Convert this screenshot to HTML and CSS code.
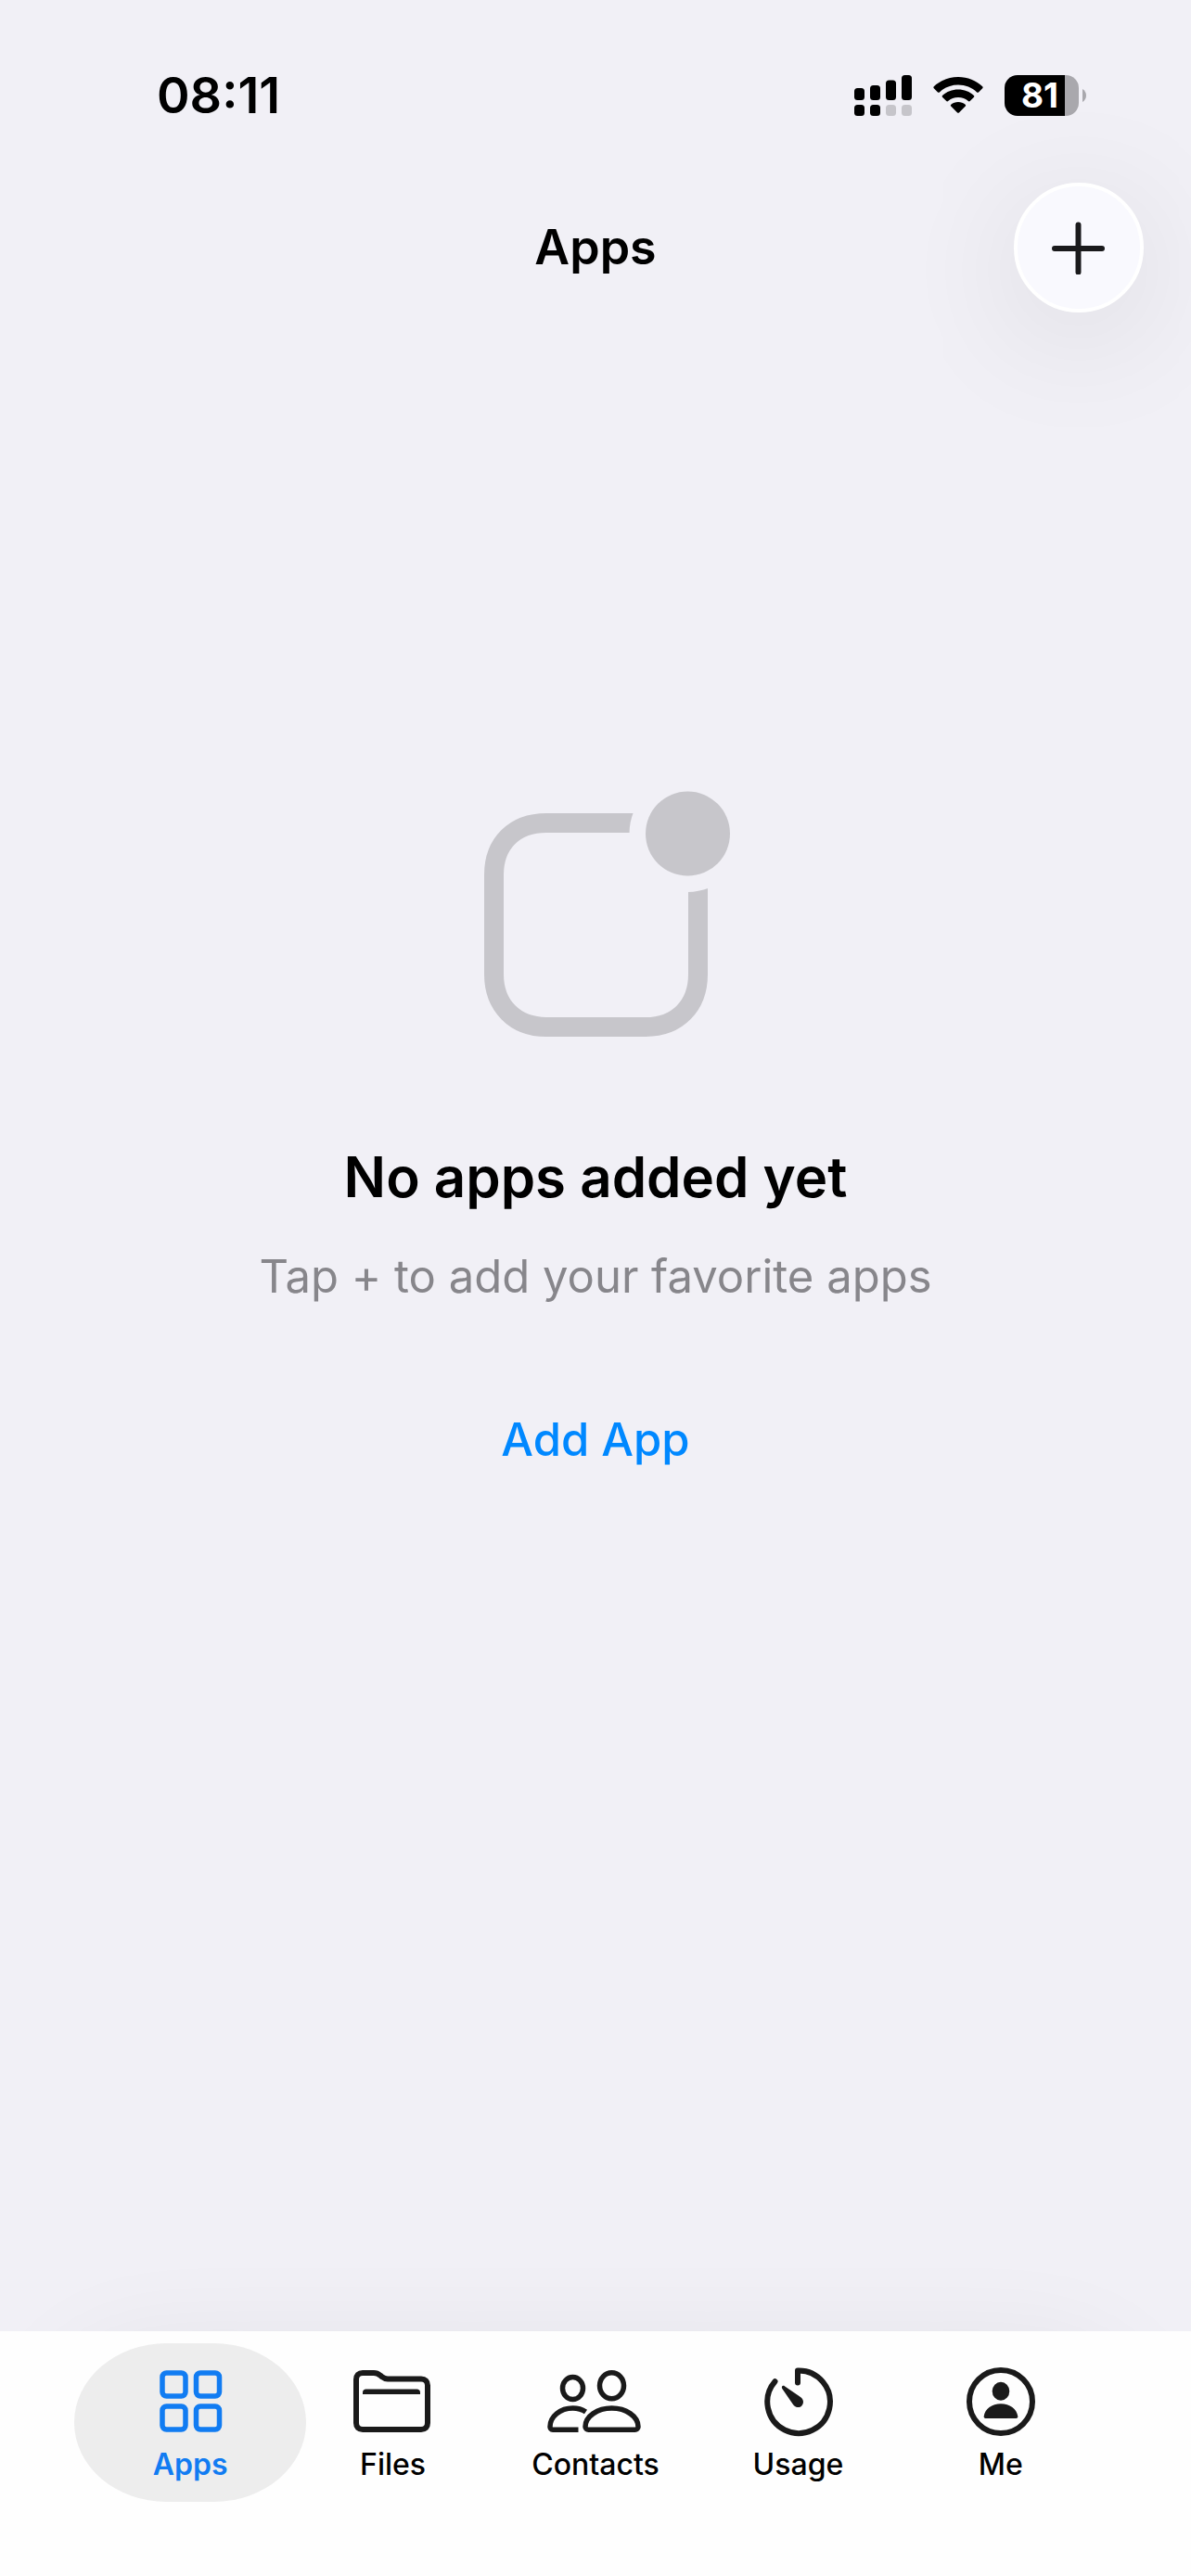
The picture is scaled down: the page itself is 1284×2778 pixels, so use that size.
FILE: index.html
```html
<!DOCTYPE html>
<html lang="en">
<head>
  <meta charset="UTF-8">
  <meta name="viewport" content="width=device-width, initial-scale=1.0">
  <title>Apps</title>
  <link rel="stylesheet" href="styles.css">
</head>
<body>
  <div class="status-bar">
    <time class="clock">08:11</time>
    <div class="status-icons">
      <svg class="signal" width="62" height="44" viewBox="0 0 62 44" aria-hidden="true">
        <rect x="0" y="14" width="11" height="13" rx="3.5"/>
        <rect x="17" y="11" width="11" height="16" rx="3.5"/>
        <rect x="34" y="5.500" width="11" height="21.500" rx="3.5"/>
        <rect x="51" y="0" width="11" height="27" rx="3.5"/>
        <rect x="0" y="32" width="11" height="12" rx="3.5"/>
        <rect x="17" y="32" width="11" height="12" rx="3.5"/>
        <rect class="dim" x="34" y="32" width="11" height="12" rx="3.5"/>
        <rect class="dim" x="51" y="32" width="11" height="12" rx="3.5"/>
      </svg>
      <svg class="wifi" width="54" height="40" viewBox="0 0 54 40" aria-hidden="true">
        <path d="M27 0C16.800 0 7.600 3.900 .8 10.300c-.6.600-.6 1.300 0 1.900l4.200 4.200c.5.500 1.300.5 1.900 0C12.100 11.500 19.200 8.600 27 8.600s14.900 2.900 20.100 7.800c.6.500 1.400.5 1.900 0l4.200-4.200c.6-.6.6-1.300 0-1.900C46.400 3.900 37.200 0 27 0z"/>
        <path d="M27 13.500c-6.500 0-12.400 2.400-16.900 6.400-.6.500-.6 1.300-.1 1.900l4.300 4.200c.5.500 1.200.5 1.800.1 2.900-2.600 6.700-4.100 10.900-4.100s8 1.500 10.900 4.100c.6.400 1.300.4 1.800-.1l4.300-4.200c.5-.6.500-1.400-.1-1.900-4.500-4-10.400-6.400-16.900-6.400z"/>
        <path d="M27 27c-2.900 0-5.600 1.100-7.700 2.700-.6.500-.6 1.300-.1 1.800l6.900 6.900c.5.500 1.300.5 1.800 0l6.900-6.900c.5-.5.500-1.300-.1-1.800C32.600 28.100 29.900 27 27 27z"/>
      </svg>
      <div class="battery">
        <span class="battery-body">81</span>
        <svg width="4" height="14" viewBox="0 0 4 14" aria-hidden="true"><path d="M0 0C2.500 1.500 4 4 4 7s-1.500 5.500-4 7z"/></svg>
      </div>
    </div>
  </div>

  <header class="header">
    <h1>Apps</h1>
    <button class="add-button" type="button" aria-label="Add">
      <svg width="58" height="58" viewBox="0 0 58 58"><path d="M28.500 4.500v51M3 30h51"/></svg>
    </button>
  </header>

  <main class="empty">
    <svg class="empty-icon" width="290" height="266" viewBox="0 0 290 266" aria-hidden="true">
      <mask id="badge-gap">
        <rect width="290" height="266" fill="#fff"/>
        <circle cx="244.500" cy="46" r="63" fill="#000"/>
      </mask>
      <path mask="url(#badge-gap)" fill="none" stroke="#c7c6cb" stroke-width="21" d="M92 34.500h107c34 0 56.500 22 56.500 56v107c0 34-22 57-56.500 57H92c-34 0-56.500-23-56.500-57v-107c0-34 22-56 56.500-56z"/>
      <circle cx="244.500" cy="46" r="45.500" fill="#c7c6cb"/>
    </svg>
    <h2>No apps added yet</h2>
    <p>Tap + to add your favorite apps</p>
    <button class="link-button" type="button">Add App</button>
  </main>

  <nav class="tab-bar">
    <a class="tab active" href="#apps" aria-current="page">
      <svg width="104" height="76" viewBox="0 0 104 76" aria-hidden="true">
        <g class="line" stroke-width="5.500">
          <rect x="22" y="7" width="25" height="25" rx="4.500"/>
          <rect x="58.500" y="7" width="25" height="25" rx="4.500"/>
          <rect x="22" y="43" width="25" height="25" rx="4.500"/>
          <rect x="58.500" y="43" width="25" height="25" rx="4.500"/>
        </g>
      </svg>
      <span>Apps</span>
    </a>
    <a class="tab" href="#files">
      <svg width="104" height="76" viewBox="0 0 104 76" aria-hidden="true">
        <g class="line" stroke-width="6">
          <path d="M12 61V14c0-4.500 2.500-7 7-7h12c3 0 5 1 7 2.700l2 1.600c2 1.700 3.500 2.200 6 2.200h36c4.500 0 7 2.500 7 7V61c0 4.500-2.500 7-7 7h-63c-4.500 0-7-2.500-7-7z"/>
        </g>
        <path d="M19 30v-2c0-2 1.500-3.500 3.500-3.500h55c2 0 3.500 1.500 3.500 3.500v2z"/>
      </svg>
      <span>Files</span>
    </a>
    <a class="tab" href="#contacts">
      <svg width="104" height="76" viewBox="0 0 104 76" aria-hidden="true">
        <g class="line" stroke-width="5.500">
          <ellipse cx="27.500" cy="23.500" rx="11" ry="12"/>
          <ellipse cx="69.500" cy="20.800" rx="13" ry="14"/>
          <path class="cut" d="M33.500 68.300H6c-2 0-3-1.500-3-3.300 0-11 11-20 24.500-20 5.500 0 10 1.300 14 4"/>
          <path d="M44.500 68.300h50c2 0 3.500-1.500 3.500-3.300 0-11-13-20-28.500-20S41 54 41 65c0 1.800 1.500 3.300 3.500 3.300z"/>
        </g>
      </svg>
      <span>Contacts</span>
    </a>
    <a class="tab" href="#usage">
      <svg width="104" height="76" viewBox="0 0 104 76" aria-hidden="true">
        <path class="line" stroke-width="6" d="M52 17.500V4.500A33.800 33.800 0 1 1 27.500 16.200"/>
        <path d="M37.800 21.200c-1-.8-2.600-.3-2.900 1-.1.600 0 1.100.4 1.700l11.500 16.800c2.300 3.600 7 4.500 9.500 1.800 2.800-2.900 2-7-1.300-9.400z"/>
      </svg>
      <span>Usage</span>
    </a>
    <a class="tab" href="#me">
      <svg width="104" height="76" viewBox="0 0 104 76" aria-hidden="true">
        <circle class="line" stroke-width="6" cx="52" cy="38" r="34"/>
        <ellipse cx="52" cy="26.800" rx="9.300" ry="10"/>
        <path d="M35.500 56c-1.300 0-2-.9-1.800-2.200C34.800 46 42.300 40.300 52 40.300S69.200 46 70.300 53.800c.2 1.300-.5 2.200-1.800 2.200z"/>
      </svg>
      <span>Me</span>
    </a>
  </nav>
</body>
</html>
```

FILE: styles.css
```css
body {
  font-family: Inter, 'Liberation Sans', sans-serif;
  background-color: #f1f0f6;
  color: #000;
  margin: 0;
  min-height: 100vh;
  display: flex;
  flex-direction: column;
}
h1, h2, p {
  margin: 0;
}
button {
  font-family: inherit;
  border: none;
  cursor: pointer;
}
svg {
  display: block;
}

/* Status bar */
.status-bar {
  display: flex;
  justify-content: space-between;
  align-items: center;
  padding: 72px 113px 0 169px;
}
.clock {
  font-size: 54px;
  line-height: 62px;
  font-weight: 600;
}
.status-icons {
  display: flex;
  align-items: center;
  gap: 23px;
}
.signal .dim {
  fill: #c6c5ca;
}
.battery {
  display: flex;
  align-items: center;
  gap: 4px;
  fill: #a9a8ad;
}
.battery-body {
  width: 80px;
  height: 44px;
  padding-right: 4px;
  box-sizing: border-box;
  border-radius: 14px;
  background: linear-gradient(to right, #000 81%, #a9a8ad 81%);
  color: #fff;
  font-size: 37px;
  line-height: 44px;
  font-weight: 700;
  text-align: center;
}

/* Header */
.header {
  display: grid;
  grid-template-columns: 1fr auto 1fr;
  align-items: center;
  padding: 63px 51px 0;
}
.header h1 {
  grid-column: 2;
  font-size: 52px;
  line-height: 62px;
  font-weight: 600;
}
.add-button {
  justify-self: end;
  display: flex;
  align-items: center;
  justify-content: center;
  width: 140px;
  height: 140px;
  padding: 0;
  border: 4px solid #fff;
  border-radius: 50%;
  background-color: #f9f9fe;
  box-shadow: 0 24px 140px rgba(0, 0, 0, 0.1);
}
.add-button path {
  stroke: #1a1a1c;
  stroke-width: 6;
  stroke-linecap: round;
}

/* Empty state */
.empty {
  flex: 1;
  display: flex;
  flex-direction: column;
  align-items: center;
  padding: 516px 48px 48px;
}
.empty h2 {
  margin-top: 112px;
  font-size: 60px;
  line-height: 76px;
  font-weight: 600;
}
.empty p {
  margin-top: 40px;
  font-size: 49px;
  line-height: 60px;
  color: #87868b;
}
.link-button {
  margin-top: 116px;
  padding: 0;
  background: none;
  color: #0088ff;
  font-size: 49px;
  line-height: 60px;
  font-weight: 500;
}

/* Tab bar */
.tab-bar {
  position: relative;
  display: grid;
  grid-template-columns: repeat(5, 1fr);
  padding: 13px 96px 80px;
  background-color: #fefefe;
}
.tab-bar::before {
  content: '';
  position: absolute;
  z-index: -1;
  inset: 0 64px 80px;
  border-radius: 90px;
  box-shadow: 0 24px 120px rgba(0, 0, 0, 0.07);
}
.tab {
  display: flex;
  flex-direction: column;
  align-items: center;
  gap: 12px;
  padding: 25px 0 22px;
  color: #000;
  fill: #1a1a1a;
  stroke: none;
  font-size: 32px;
  line-height: 36px;
  font-weight: 500;
  text-decoration: none;
}
.tab .line {
  fill: none;
  stroke: #1a1a1a;
  stroke-linecap: round;
  stroke-linejoin: round;
}
.tab .cut {
  stroke-linecap: butt;
}
.tab.active {
  margin: 0 -16px;
  border-radius: 100px / 86px;
  background-color: #ededed;
  color: #117cf2;
  font-weight: 600;
}
.tab.active .line {
  stroke: #117cf2;
}
```
